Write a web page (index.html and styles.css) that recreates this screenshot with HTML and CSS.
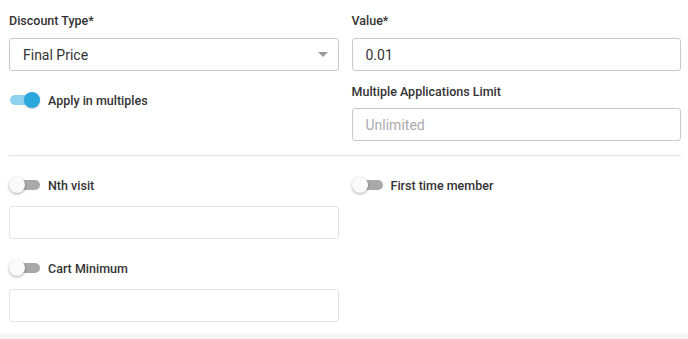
FILE: index.html
```html
<!DOCTYPE html>
<html lang="en">
<head>
    <meta charset="UTF-8">
    <meta name="viewport" content="width=device-width, initial-scale=1.0">
    <title>Discount Rules</title>
    <link rel="stylesheet" href="styles.css">
</head>
<body>
    <div class="discount-form">
        <div class="form-row top-row">
            <div class="form-group">
                <label class="field-label" for="discountType">Discount Type*</label>
                <div class="select-box" id="discountType">
                    <span>Final Price</span>
                    <span class="caret"></span>
                </div>
            </div>
            <div class="form-group">
                <label class="field-label" for="value">Value*</label>
                <input class="text-input" type="text" id="value" value="0.01">
            </div>
        </div>

        <div class="form-row second-row">
            <div class="form-group">
                <div class="toggle-row">
                    <span class="switch on"><span class="knob"></span></span>
                    <span class="toggle-label">Apply in multiples</span>
                </div>
            </div>
            <div class="form-group">
                <label class="field-label" for="limit">Multiple Applications Limit</label>
                <input class="text-input" type="text" id="limit" placeholder="Unlimited">
            </div>
        </div>

        <hr class="divider">

        <div class="form-row">
            <div class="form-group">
                <div class="toggle-row">
                    <span class="switch"><span class="knob"></span></span>
                    <span class="toggle-label">Nth visit</span>
                </div>
                <input class="text-input disabled" type="text" disabled>
            </div>
            <div class="form-group">
                <div class="toggle-row">
                    <span class="switch"><span class="knob"></span></span>
                    <span class="toggle-label">First time member</span>
                </div>
            </div>
        </div>

        <div class="form-row cart-row">
            <div class="form-group">
                <div class="toggle-row">
                    <span class="switch"><span class="knob"></span></span>
                    <span class="toggle-label">Cart Minimum</span>
                </div>
                <input class="text-input disabled" type="text" disabled>
            </div>
            <div class="form-group"></div>
        </div>
    </div>
    <div class="footer-strip"></div>
</body>
</html>
```

FILE: styles.css
```css
body {
    font-family: Roboto, 'Liberation Sans', sans-serif;
    margin: 0;
    background: #fff;
    color: #333;
}
.discount-form {
    padding: 13px 7px 0 9px;
    height: 333px;
    box-sizing: border-box;
}
.form-row {
    display: grid;
    grid-template-columns: 1fr 1fr;
    column-gap: 13px;
}
.second-row {
    margin-top: 13px;
}
.cart-row {
    margin-top: 21px;
}
.form-group {
    display: flex;
    flex-direction: column;
}
.field-label {
    display: block;
    height: 16px;
    line-height: 16px;
    font-size: 12.5px;
    font-weight: 500;
    color: #333;
    margin-bottom: 9px;
}
.second-row .field-label {
    margin-bottom: 8px;
}
.text-input,
.select-box {
    width: 100%;
    height: 33px;
    box-sizing: border-box;
    border: 1px solid #c9c9c9;
    border-radius: 3px;
    padding: 0 13px;
    font-family: inherit;
    font-size: 14px;
    color: #333;
    background: #fff;
    outline: none;
}
.text-input::placeholder {
    color: #aaa;
}
.text-input.disabled {
    border-color: #e3e3e3;
}
.select-box {
    display: flex;
    align-items: center;
    justify-content: space-between;
    padding-right: 10px;
}
.caret {
    width: 0;
    height: 0;
    border-left: 5px solid transparent;
    border-right: 5px solid transparent;
    border-top: 5px solid #999;
}
.toggle-row {
    display: flex;
    align-items: center;
    height: 16px;
    margin-bottom: 13px;
}
.second-row .toggle-row {
    margin-top: 8px;
}
.switch {
    position: relative;
    flex-shrink: 0;
    width: 28px;
    height: 10px;
    margin-left: 3px;
    border-radius: 5px;
    background: #a9a9a9;
}
.switch .knob {
    position: absolute;
    top: -3px;
    left: -3px;
    width: 16px;
    height: 16px;
    border-radius: 50%;
    background: #fafafa;
    box-shadow: 0 1px 3px rgba(0, 0, 0, 0.35);
}
.switch.on {
    background: #8fd1ef;
    margin-left: 1px;
    width: 30px;
}
.switch.on .knob {
    left: 14px;
    background: #2aa7dd;
    box-shadow: 0 1px 2px rgba(0, 0, 0, 0.2);
}
.toggle-label {
    margin-left: 8px;
    font-size: 12.5px;
    font-weight: 500;
    color: #333;
}
.divider {
    border: none;
    border-top: 1px solid #e2e2e2;
    margin: 14px 0 21px;
}
.footer-strip {
    height: 6px;
    background: #f6f6f6;
}
```
